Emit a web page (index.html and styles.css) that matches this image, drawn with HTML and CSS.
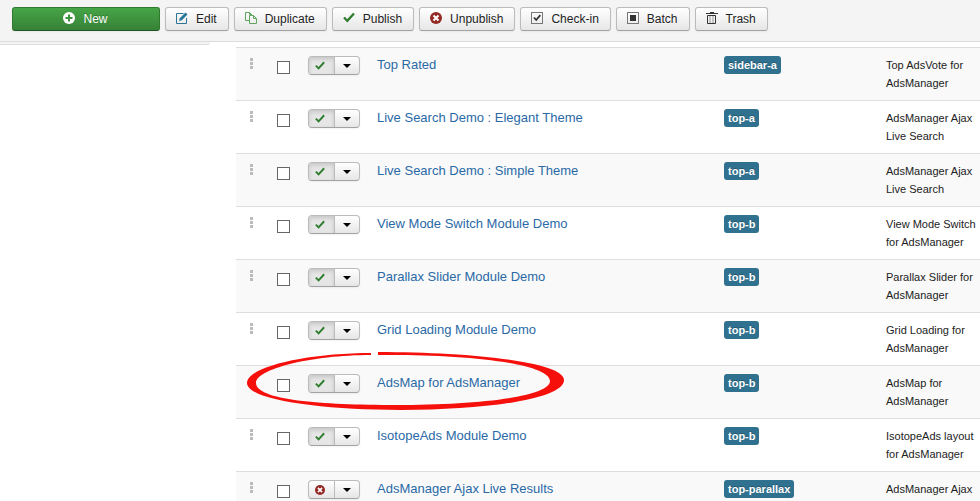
FILE: index.html
```
<!DOCTYPE html>
<html lang="en">
<head>
    <meta charset="UTF-8">
    <meta name="viewport" content="width=device-width, initial-scale=1.0">
    <title>Module Manager</title>
    <link rel="stylesheet" href="styles.css">
</head>
<body>

<!-- Icons shared by the toolbar and the list -->
<svg class="sprite" width="0" height="0" aria-hidden="true">
    <symbol id="icon-plus" viewBox="0 0 12 12">
        <circle cx="6" cy="6" r="6" fill="#fff"/>
        <path d="M6 2.5v7M2.5 6h7" stroke="#3d943d" stroke-width="2"/>
    </symbol>
    <symbol id="icon-edit" viewBox="0 0 12 12">
        <path d="M7.5 1.500H.5v10h10V6" fill="none" stroke="#2b7596"/>
        <path d="M3 9l.8-2.800L9.500.5l2 2L5.800 8.200z" fill="#24769a"/>
    </symbol>
    <symbol id="icon-copy" viewBox="0 0 12 12">
        <path d="M4.500 8.500h-4v-8h4l2 2v1M4.500.5v2h2M4.500 11.500v-8h4l3 3v5zM8.500 3.500v3h3" fill="none" stroke="#5fa55f"/>
    </symbol>
    <symbol id="icon-check" viewBox="0 0 12 12">
        <path d="M1 5.500l3.300 3.300L11 1.500" fill="none" stroke="#2f7d2f" stroke-width="2.300"/>
    </symbol>
    <symbol id="icon-cancel" viewBox="0 0 12 12">
        <circle cx="6" cy="6" r="6" fill="#942a25"/>
        <path d="M3.500 3.500l5 5M8.500 3.500l-5 5" stroke="#fff" stroke-width="2"/>
    </symbol>
    <symbol id="icon-checkin" viewBox="0 0 12 12">
        <rect x=".5" y=".5" width="11" height="11" fill="none" stroke="#777"/>
        <path d="M3 5.500l2.200 2.500L9.300 3.200" fill="none" stroke="#333" stroke-width="1.800"/>
    </symbol>
    <symbol id="icon-batch" viewBox="0 0 12 12">
        <rect x=".5" y=".5" width="11" height="11" fill="none" stroke="#777"/>
        <rect x="3" y="3" width="6" height="6" fill="#333"/>
    </symbol>
    <symbol id="icon-trash" viewBox="0 0 12 12">
        <path d="M0 1.500h12M4 .5h4" stroke="#333"/>
        <path d="M1.500 3.500h8v8h-8z" fill="none" stroke="#333"/>
        <path d="M4 4v7M7 4v7" stroke="#999"/>
    </symbol>
    <symbol id="icon-handle" viewBox="0 0 3 11">
        <path d="M0 0h3v3H0zM0 4h3v3H0zM0 8h3v3H0z" fill="#bbb" shape-rendering="crispEdges"/>
    </symbol>
</svg>

<div class="toolbar">
    <button type="button" class="btn btn-new"><svg><use href="#icon-plus"/></svg>New</button>
    <button type="button" class="btn"><svg><use href="#icon-edit"/></svg>Edit</button>
    <button type="button" class="btn"><svg><use href="#icon-copy"/></svg>Duplicate</button>
    <button type="button" class="btn"><svg><use href="#icon-check"/></svg>Publish</button>
    <button type="button" class="btn"><svg><use href="#icon-cancel"/></svg>Unpublish</button>
    <button type="button" class="btn"><svg><use href="#icon-checkin"/></svg>Check-in</button>
    <button type="button" class="btn"><svg><use href="#icon-batch"/></svg>Batch</button>
    <button type="button" class="btn"><svg><use href="#icon-trash"/></svg>Trash</button>
</div>

<div class="content">
    <div class="sidebar"></div>

    <div class="main">
        <table class="modules">
            <colgroup>
                <col class="col-order">
                <col class="col-check">
                <col class="col-status">
                <col class="col-title">
                <col class="col-position">
                <col class="col-type">
            </colgroup>
            <tbody>
                <tr>
                    <td class="order"><svg><use href="#icon-handle"/></svg></td>
                    <td><input type="checkbox" aria-label="Select Top Rated"></td>
                    <td>
                        <div class="btn-group">
                            <button type="button" class="state active" aria-label="Unpublish"><svg><use href="#icon-check"/></svg></button>
                            <button type="button" class="toggle" aria-label="More actions"><span class="caret"></span></button>
                        </div>
                    </td>
                    <td class="title"><a href="#">Top Rated</a></td>
                    <td><span class="label">sidebar-a</span></td>
                    <td class="type">Top AdsVote for AdsManager</td>
                </tr>
                <tr>
                    <td class="order"><svg><use href="#icon-handle"/></svg></td>
                    <td><input type="checkbox" aria-label="Select Live Search Demo : Elegant Theme"></td>
                    <td>
                        <div class="btn-group">
                            <button type="button" class="state active" aria-label="Unpublish"><svg><use href="#icon-check"/></svg></button>
                            <button type="button" class="toggle" aria-label="More actions"><span class="caret"></span></button>
                        </div>
                    </td>
                    <td class="title"><a href="#">Live Search Demo : Elegant Theme</a></td>
                    <td><span class="label">top-a</span></td>
                    <td class="type">AdsManager Ajax Live Search</td>
                </tr>
                <tr>
                    <td class="order"><svg><use href="#icon-handle"/></svg></td>
                    <td><input type="checkbox" aria-label="Select Live Search Demo : Simple Theme"></td>
                    <td>
                        <div class="btn-group">
                            <button type="button" class="state active" aria-label="Unpublish"><svg><use href="#icon-check"/></svg></button>
                            <button type="button" class="toggle" aria-label="More actions"><span class="caret"></span></button>
                        </div>
                    </td>
                    <td class="title"><a href="#">Live Search Demo : Simple Theme</a></td>
                    <td><span class="label">top-a</span></td>
                    <td class="type">AdsManager Ajax Live Search</td>
                </tr>
                <tr>
                    <td class="order"><svg><use href="#icon-handle"/></svg></td>
                    <td><input type="checkbox" aria-label="Select View Mode Switch Module Demo"></td>
                    <td>
                        <div class="btn-group">
                            <button type="button" class="state active" aria-label="Unpublish"><svg><use href="#icon-check"/></svg></button>
                            <button type="button" class="toggle" aria-label="More actions"><span class="caret"></span></button>
                        </div>
                    </td>
                    <td class="title"><a href="#">View Mode Switch Module Demo</a></td>
                    <td><span class="label">top-b</span></td>
                    <td class="type">View Mode Switch for AdsManager</td>
                </tr>
                <tr>
                    <td class="order"><svg><use href="#icon-handle"/></svg></td>
                    <td><input type="checkbox" aria-label="Select Parallax Slider Module Demo"></td>
                    <td>
                        <div class="btn-group">
                            <button type="button" class="state active" aria-label="Unpublish"><svg><use href="#icon-check"/></svg></button>
                            <button type="button" class="toggle" aria-label="More actions"><span class="caret"></span></button>
                        </div>
                    </td>
                    <td class="title"><a href="#">Parallax Slider Module Demo</a></td>
                    <td><span class="label">top-b</span></td>
                    <td class="type">Parallax Slider for AdsManager</td>
                </tr>
                <tr>
                    <td class="order"><svg><use href="#icon-handle"/></svg></td>
                    <td><input type="checkbox" aria-label="Select Grid Loading Module Demo"></td>
                    <td>
                        <div class="btn-group">
                            <button type="button" class="state active" aria-label="Unpublish"><svg><use href="#icon-check"/></svg></button>
                            <button type="button" class="toggle" aria-label="More actions"><span class="caret"></span></button>
                        </div>
                    </td>
                    <td class="title"><a href="#">Grid Loading Module Demo</a></td>
                    <td><span class="label">top-b</span></td>
                    <td class="type">Grid Loading for AdsManager</td>
                </tr>
                <tr>
                    <td class="order">
                        <svg><use href="#icon-handle"/></svg>
                        <!-- Hand drawn ring around the module -->
                        <svg class="ring" viewBox="0 0 340 80">
                            <path d="M135 13C70 13 11 27 11 43C11 60 85 70 165 70C250 70 328 59 328 40C328 22 235 12 142 12L142 15C220 14 314 22 314 41C314 57 240 65 160 65C85 65 20 60 20 43C20 29 75 15 135 15Z" fill="#f6100c"/>
                        </svg>
                    </td>
                    <td><input type="checkbox" aria-label="Select AdsMap for AdsManager"></td>
                    <td>
                        <div class="btn-group">
                            <button type="button" class="state active" aria-label="Unpublish"><svg><use href="#icon-check"/></svg></button>
                            <button type="button" class="toggle" aria-label="More actions"><span class="caret"></span></button>
                        </div>
                    </td>
                    <td class="title"><a href="#">AdsMap for AdsManager</a></td>
                    <td><span class="label">top-b</span></td>
                    <td class="type">AdsMap for AdsManager</td>
                </tr>
                <tr>
                    <td class="order"><svg><use href="#icon-handle"/></svg></td>
                    <td><input type="checkbox" aria-label="Select IsotopeAds Module Demo"></td>
                    <td>
                        <div class="btn-group">
                            <button type="button" class="state active" aria-label="Unpublish"><svg><use href="#icon-check"/></svg></button>
                            <button type="button" class="toggle" aria-label="More actions"><span class="caret"></span></button>
                        </div>
                    </td>
                    <td class="title"><a href="#">IsotopeAds Module Demo</a></td>
                    <td><span class="label">top-b</span></td>
                    <td class="type">IsotopeAds layout for AdsManager</td>
                </tr>
                <tr>
                    <td class="order"><svg><use href="#icon-handle"/></svg></td>
                    <td><input type="checkbox" aria-label="Select AdsManager Ajax Live Results"></td>
                    <td>
                        <div class="btn-group">
                            <button type="button" class="state" aria-label="Publish"><svg><use href="#icon-cancel"/></svg></button>
                            <button type="button" class="toggle" aria-label="More actions"><span class="caret"></span></button>
                        </div>
                    </td>
                    <td class="title"><a href="#">AdsManager Ajax Live Results</a></td>
                    <td><span class="label">top-parallax</span></td>
                    <td class="type">AdsManager Ajax</td>
                </tr>
            </tbody>
        </table>
    </div>
</div>

</body>
</html>
```
FILE: styles.css
```
* {
    box-sizing: border-box;
}
html {
    overflow-y: auto;
    scrollbar-width: none;
}
body {
    margin: 0;
    background: #fff;
    color: #222;
    font-family: "Liberation Sans", Arial, sans-serif;
    font-size: 13px;
    line-height: 18px;
}
.sprite {
    position: absolute;
}

/* Toolbar */
.toolbar {
    display: flex;
    gap: 5px;
    padding: 7px 12px 10px;
    background: #f4f4f4;
    border-bottom: 1px solid #ddd;
}
.btn {
    display: flex;
    align-items: center;
    justify-content: center;
    height: 24px;
    padding: 0 11px 0 10px;
    border: 1px solid #bbb;
    border-bottom-color: #a2a2a2;
    border-radius: 3px;
    background: linear-gradient(#fff, #e6e6e6);
    box-shadow: 0 1px 2px rgba(0, 0, 0, 0.05);
    color: #222;
    font-family: inherit;
    font-size: 12px;
    line-height: 18px;
    text-shadow: 0 1px 1px rgba(255, 255, 255, 0.75);
    white-space: nowrap;
    cursor: pointer;
}
.btn svg {
    width: 12px;
    height: 12px;
    margin: 0 8px 2px 0;
}
.btn-new {
    width: 148px;
    border-color: #2f7a2f;
    border-bottom-color: #225622;
    background: linear-gradient(#46a546, #378137);
    color: #fff;
    text-shadow: 0 -1px 0 rgba(0, 0, 0, 0.25);
}

/* Content */
.content {
    display: flex;
    align-items: flex-start;
}
.sidebar {
    flex: 0 0 210px;
    height: 3px;
    margin-right: 26px;
    background: #f4f4f4;
    border-bottom: 1px solid #ddd;
    border-bottom-right-radius: 3px;
}
.main {
    flex: 1;
    min-width: 0;
    padding-top: 5px;
}

/* Module list */
.modules {
    width: 100%;
    table-layout: fixed;
    border-spacing: 0;
}
.col-order {
    width: 33px;
}
.col-check {
    width: 31px;
}
.col-status {
    width: 69px;
}
.col-title {
    width: 347px;
}
.col-position {
    width: 162px;
}
.modules td {
    height: 53px;
    padding: 8px 0 8px 8px;
    border-top: 1px solid #ddd;
    vertical-align: top;
}
.modules tr:nth-child(odd) td {
    background: #f9f9f9;
}
.modules .order {
    position: relative;
    padding-left: 14px;
}
.order svg {
    display: block;
    width: 3px;
    height: 11px;
    margin-top: 2px;
}
.order .ring {
    position: absolute;
    z-index: 1;
    top: -26px;
    left: 0;
    width: 340px;
    height: 80px;
    margin: 0;
    pointer-events: none;
}
.modules input {
    appearance: none;
    display: block;
    width: 13px;
    height: 13px;
    margin: 5px 0 0;
    border: 1px solid #666;
    background: #fff;
}
.modules input:checked {
    background: #3071a9;
}
.btn-group {
    display: flex;
    width: 52px;
    height: 19px;
    border: 1px solid #bbb;
    border-bottom-color: #a2a2a2;
    border-radius: 4px;
    background: linear-gradient(#fff, #e6e6e6);
    box-shadow: 0 1px 2px rgba(0, 0, 0, 0.05);
    overflow: hidden;
}
.btn-group button {
    display: flex;
    flex: 1;
    align-items: center;
    justify-content: center;
    padding: 0;
    border: 0;
    background: none;
    cursor: pointer;
}
.btn-group .active {
    background: #e6e6e6;
    box-shadow: inset 0 2px 4px rgba(0, 0, 0, 0.15);
}
.btn-group .toggle {
    border-left: 1px solid #bbb;
}
.state svg {
    width: 10px;
    height: 10px;
    margin-right: 2px;
}
.caret {
    border-top: 4px solid #000;
    border-right: 4px solid transparent;
    border-left: 4px solid transparent;
}
.modules a {
    color: #2a69a6;
    text-decoration: none;
}
.modules a:hover {
    text-decoration: underline;
}
.label {
    display: inline-block;
    padding: 0 4px;
    border-radius: 3px;
    background: #30718f;
    color: #fff;
    font-size: 11px;
    font-weight: bold;
    text-shadow: 0 -1px 0 rgba(0, 0, 0, 0.25);
}
.modules .type {
    font-size: 11px;
}
```
